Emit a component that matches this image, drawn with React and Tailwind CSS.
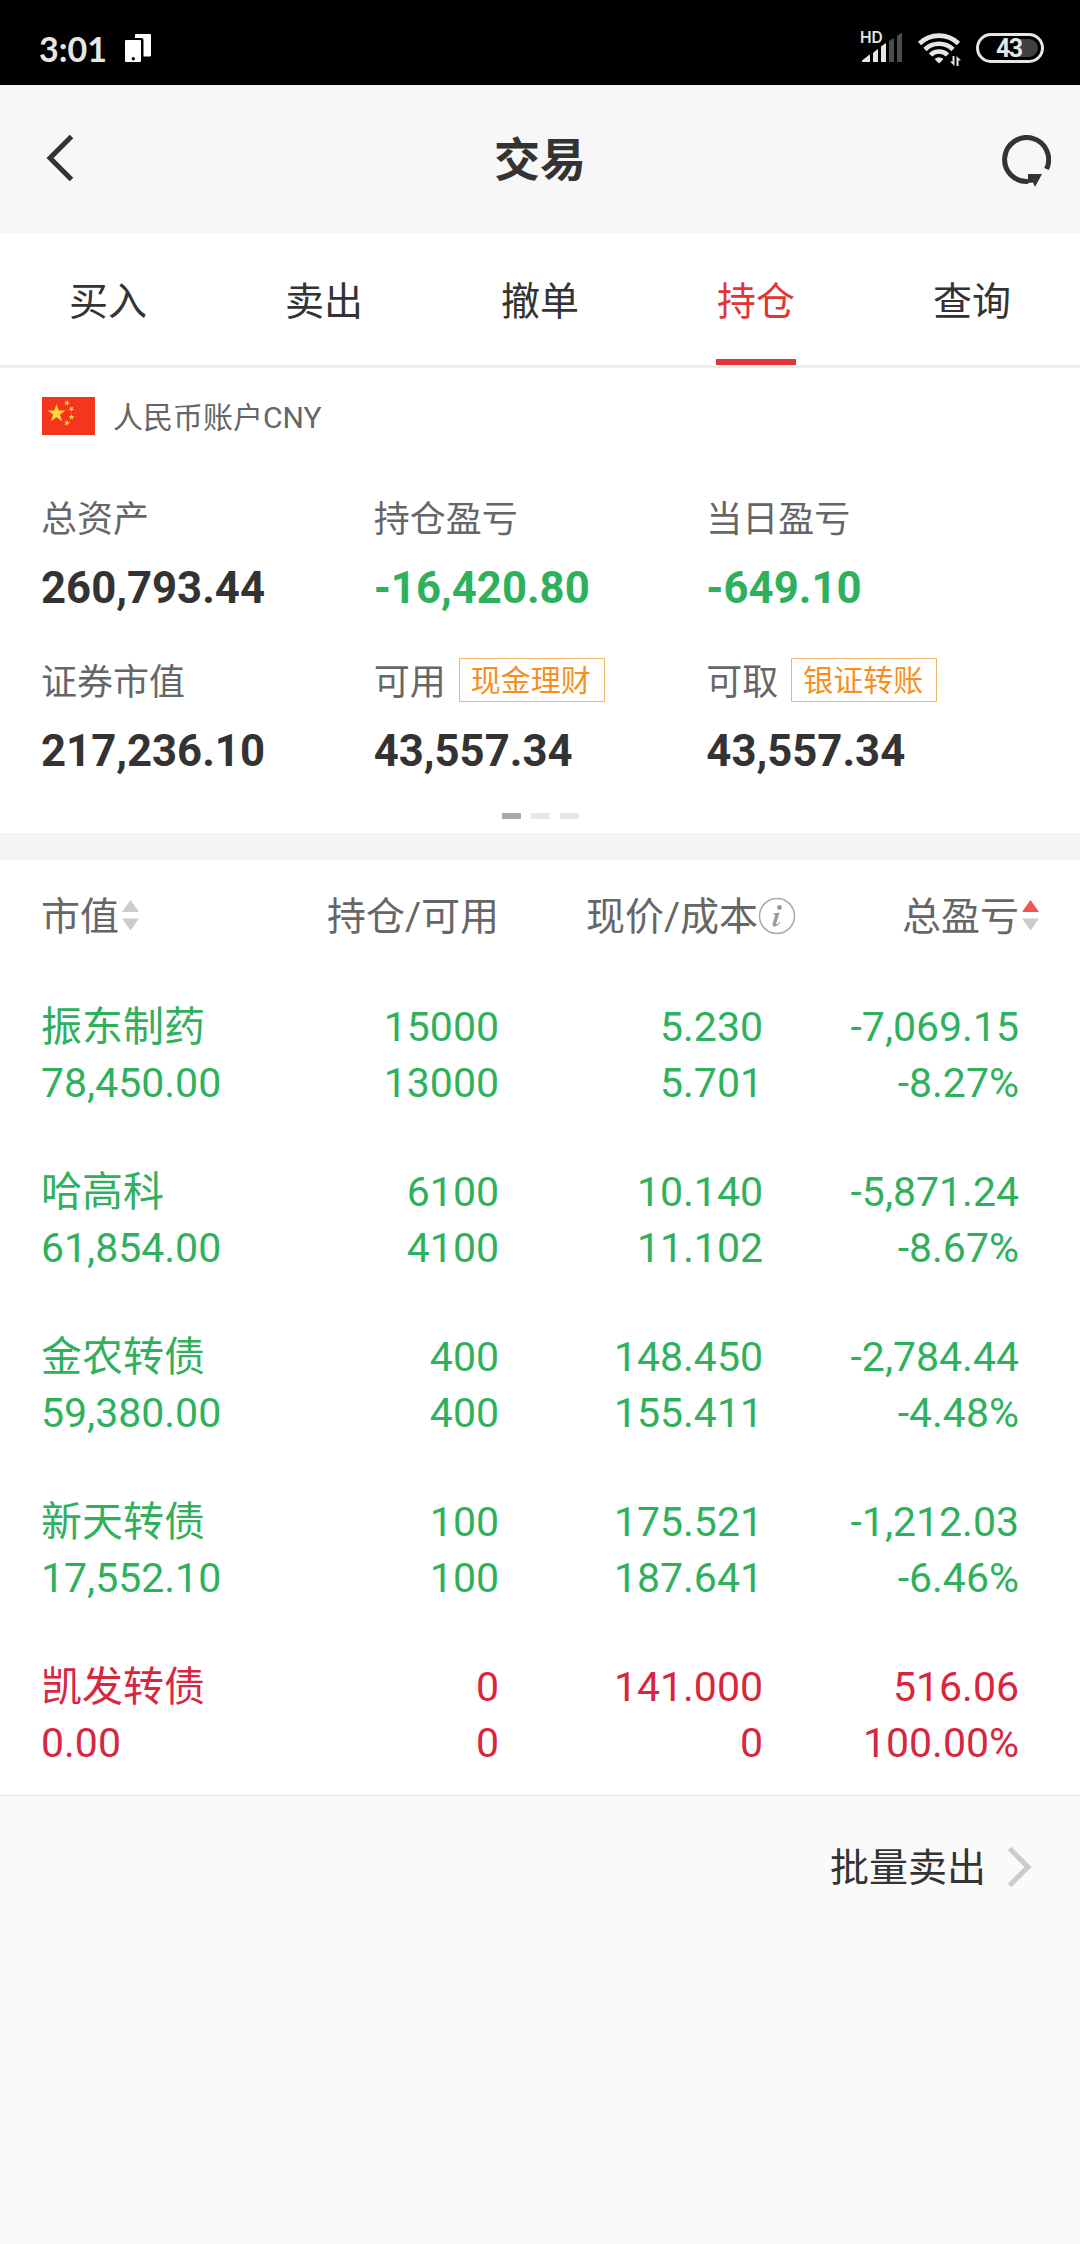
const TABS = ['买入', '卖出', '撤单', '持仓', '查询'];

const SUMMARY = [
  { label: '总资产', value: '260,793.44', tone: 'text-[#333333]' },
  { label: '持仓盈亏', value: '-16,420.80', tone: 'text-[#2fb05c]' },
  { label: '当日盈亏', value: '-649.10', tone: 'text-[#2fb05c]' },
  { label: '证券市值', value: '217,236.10', tone: 'text-[#333333]' },
  { label: '可用', action: '现金理财', value: '43,557.34', tone: 'text-[#333333]' },
  { label: '可取', action: '银证转账', value: '43,557.34', tone: 'text-[#333333]' },
];

const POSITIONS = [
  { name: '振东制药', cells: ['78,450.00', '15000', '13000', '5.230', '5.701', '-7,069.15', '-8.27%'] },
  { name: '哈高科', cells: ['61,854.00', '6100', '4100', '10.140', '11.102', '-5,871.24', '-8.67%'] },
  { name: '金农转债', cells: ['59,380.00', '400', '400', '148.450', '155.411', '-2,784.44', '-4.48%'] },
  { name: '新天转债', cells: ['17,552.10', '100', '100', '175.521', '187.641', '-1,212.03', '-6.46%'] },
  { name: '凯发转债', up: true, cells: ['0.00', '0', '0', '141.000', '0', '516.06', '100.00%'] },
];

function StatusBar() {
  return (
    <div className="flex h-[85px] items-center justify-between bg-black pl-[39px] pr-[34px]">
      <div className="flex items-center pt-3">
        <span className="w-[86px] font-['Lato'] text-[34px] font-bold leading-[44px] text-[#e6e6e6]">3:01</span>
        <svg className="mb-0.5 h-7 w-[27px]" viewBox="0 0 27 28">
          <path d="M10 1Q10 0 11 0H25Q26 0 26 1V21.5Q26 22.500 25 22.500H18.500V6Q18.500 4 16.500 4H10Z" fill="#fff" />
          <rect x="0" y="6" width="16" height="22" rx="1" fill="#fff" />
          <circle cx="8.300" cy="24.800" r="1.700" fill="#000" />
        </svg>
      </div>
      <div className="flex items-center pt-2.5">
        <svg className="h-[52px] w-[188px]" viewBox="858 22 188 52">
          <text x="860" y="43" fontFamily="Inter" fontWeight="600" fontSize="15.500" fill="#e6e6e6">HD</text>
          <path d="M862 62V60.500L869 55Q870 54.500 870 55.500V62ZM873 62V53L877 49.500Q878 49 878 50V62ZM881 62V46.500L885 43.500Q886 43 886 44V62Z" fill="#e6e6e6" />
          <path d="M889 62V41L893 38.500Q894 38 894 39V62ZM897 62V36L901 33Q902 32.500 902 34V62Z" fill="#4d4d4d" />
          <g fill="none" stroke="#e6e6e6" strokeWidth="4.600">
            <path d="M919.500 43.500A28 28 0 0 1 958.500 43.500" />
            <path d="M925 49.500A20 20 0 0 1 953 49.500" />
            <path d="M930.500 55A12 12 0 0 1 947.500 55" />
          </g>
          <path d="M934.500 59Q939 55.500 943.500 59L939 63.500Z" fill="#e6e6e6" />
          <path d="M952.500 56H954.500V66L950 61.500H952.500ZM956.500 66V56L961 60.500H958.500V66Z" fill="#e6e6e6" />
          <rect x="977.500" y="34.500" width="65" height="27" rx="13.500" fill="#000" stroke="#e6e6e6" strokeWidth="3" />
          <path d="M1019 39H1029A9 9 0 0 1 1029 57H1019Z" fill="#404040" />
          <text x="996" y="57" fontFamily="Roboto" fontWeight="700" fontSize="25" fill="#e6e6e6" textLength="27">43</text>
        </svg>
      </div>
    </div>
  );
}

function Header() {
  return (
    <header className="grid h-[148px] grid-cols-[1fr_auto_1fr] items-center bg-[#f7f7f7] pl-[45px] pr-[29px]">
      <svg className="-mt-0.5 h-[46px] w-[50px]" viewBox="0 0 50 46">
        <path d="M26.500 1.500L5 23L26.500 44.500" fill="none" stroke="#333" strokeWidth="5" />
      </svg>
      <h1 className="-ml-4 mt-0.5 text-[46px] font-bold leading-none text-[#333333]">交易</h1>
      <svg className="ml-auto mt-[3px] h-[52px] w-[50px]" viewBox="0 0 50 52">
        <path d="M45.500 34A22 22 0 1 0 27 46.500" fill="none" stroke="#333" strokeWidth="5" />
        <path d="M27 39H41L34 52L32 47.500L27 48Z" fill="#333" />
      </svg>
    </header>
  );
}

function Tabs() {
  return (
    <nav className="grid h-[135px] grid-cols-5 border-b-[3px] border-[#ececec]">
      {TABS.map((tab) => (
        <div key={tab} className={`flex flex-col items-center justify-between text-[39px] ${tab === '持仓' ? 'text-[#e23636]' : 'text-[#333333]'}`}>
          <span className="pt-10 leading-[58px]">{tab}</span>
          {tab === '持仓' && <span className="h-1.5 w-20 bg-[#e03535]" />}
        </div>
      ))}
    </nav>
  );
}

const STAR = 'M0-1L.2245-.309H.951L.363.118L.588.809L0 .382L-.588.809L-.363.118L-.951-.309H-.2245Z';

function Flag() {
  return (
    <svg className="h-[38px] w-[53px]" viewBox="0 0 53 38">
      <rect width="53" height="38" fill="#f4361e" />
      <g fill="#ffd83b">
        <path d={STAR} transform="translate(14.500 16.500) scale(9.500)" />
        <path d={STAR} transform="translate(25 6) rotate(20) scale(3.200)" />
        <path d={STAR} transform="translate(29.500 12) rotate(40) scale(3.200)" />
        <path d={STAR} transform="translate(29.500 20) scale(3.200)" />
        <path d={STAR} transform="translate(25 26) rotate(20) scale(3.200)" />
      </g>
    </svg>
  );
}

function Account() {
  return (
    <section className="h-[465px] pl-[41px] pr-[41px] pt-[29px]">
      <div className="flex h-[38px] items-center gap-[18px] pl-px text-[30px] text-[#666666]">
        <Flag />
        <span className="pt-0.5">人民币账户CNY</span>
      </div>
      <div className="mt-[55px] grid grid-cols-3">
        {SUMMARY.map((item) => (
          <div key={item.label} className="h-[163px]">
            <div className="flex h-14 items-center gap-[13px] text-[36px] text-[#666666]">
              <span className="pt-[3px]">{item.label}</span>
              {item.action && (
                <span className="-mt-0.5 flex h-11 w-[146px] items-center justify-center border border-[#f3b566] pr-0.5 text-[30px] text-[#f78f1e]">{item.action}</span>
              )}
            </div>
            <div className={`mt-3.5 text-[43.7px] font-bold leading-[56px] ${item.tone}`}>{item.value}</div>
          </div>
        ))}
      </div>
      <div className="-mt-[3px] flex justify-center gap-2.5">
        <span className="h-1.5 w-[19px] bg-[#aaaaaa]" />
        <span className="h-1.5 w-[19px] bg-[#e6e6e6]" />
        <span className="h-1.5 w-[19px] bg-[#e6e6e6]" />
      </div>
    </section>
  );
}

function SortArrows({ active }) {
  return (
    <svg className="-mt-[3px] h-[31px] w-[17px]" viewBox="0 0 17 31">
      <path d="M8.500 0L17 12H0Z" fill={active ? '#ee5555' : '#cccccc'} />
      <path d="M0 18.500H17L8.500 30.500Z" fill="#cccccc" />
    </svg>
  );
}

function InfoIcon() {
  return (
    <svg className="-mt-[3px] h-[38px] w-[38px]" viewBox="0 0 38 38">
      <circle cx="19" cy="19" r="17.500" fill="none" stroke="#aaa" strokeWidth="1.500" />
      <circle cx="21.500" cy="10.500" r="2.400" fill="#999" />
      <path d="M15.500 16.500L21.500 15.500L18.200 26.500Q18 28 19.500 27Q20.500 26.200 21.500 24.800L22.200 25.300Q19.500 29.500 16.500 29.500Q14 29.300 14.700 26.500L17.200 18.200Q17.500 17.300 15.500 17.400Z" fill="#999" />
    </svg>
  );
}

const COLUMNS = 'grid grid-cols-[231px_227px_264px_256px]';

function Holdings() {
  return (
    <section className="h-[935px] pl-[41px]">
      <div className={`${COLUMNS} h-[113px] items-center pt-px text-[39px] text-[#666666]`}>
        <div className="flex items-center gap-[3px]">市值<SortArrows /></div>
        <div className="text-right">持仓/可用</div>
        <div className="-mr-[33px] flex items-center justify-end">现价/成本<InfoIcon /></div>
        <div className="-mr-5 flex items-center justify-end gap-[3px]">总盈亏<SortArrows active /></div>
      </div>
      <div className="pt-[26px]">
        {POSITIONS.map(({ name, up, cells }) => (
          <div key={name} className={`${COLUMNS} h-[165px] text-right text-[41px] leading-[56px] ${up ? 'text-[#d9263f]' : 'text-[#2fb05c]'}`}>
            <div className="text-left">
              <div>{name}</div>
              <div>{cells[0]}</div>
            </div>
            <div>
              <div>{cells[1]}</div>
              <div>{cells[2]}</div>
            </div>
            <div>
              <div>{cells[3]}</div>
              <div>{cells[4]}</div>
            </div>
            <div>
              <div>{cells[5]}</div>
              <div>{cells[6]}</div>
            </div>
          </div>
        ))}
      </div>
    </section>
  );
}

export default function App() {
  return (
    <main className="flex h-[2244px] w-[1080px] flex-col overflow-hidden bg-white font-['Roboto','Noto_Sans_CJK_SC',sans-serif]" lang="zh-CN">
      <StatusBar />
      <Header />
      <Tabs />
      <Account />
      <div className="h-[27px] bg-[#f4f4f4]" />
      <Holdings />
      <footer className="flex flex-1 items-start justify-end border-t border-[#e8e8e8] bg-[#fafafa] pr-12 pt-[43px]">
        <div className="flex items-center gap-[22px] text-[39px] leading-[58px] text-[#333333]">
          批量卖出
          <svg className="-mt-[3px] h-10 w-6" viewBox="0 0 24 40">
            <path d="M1.500 1.500L20 20L1.500 38.500" fill="none" stroke="#ccc" strokeWidth="5" />
          </svg>
        </div>
      </footer>
    </main>
  );
}
